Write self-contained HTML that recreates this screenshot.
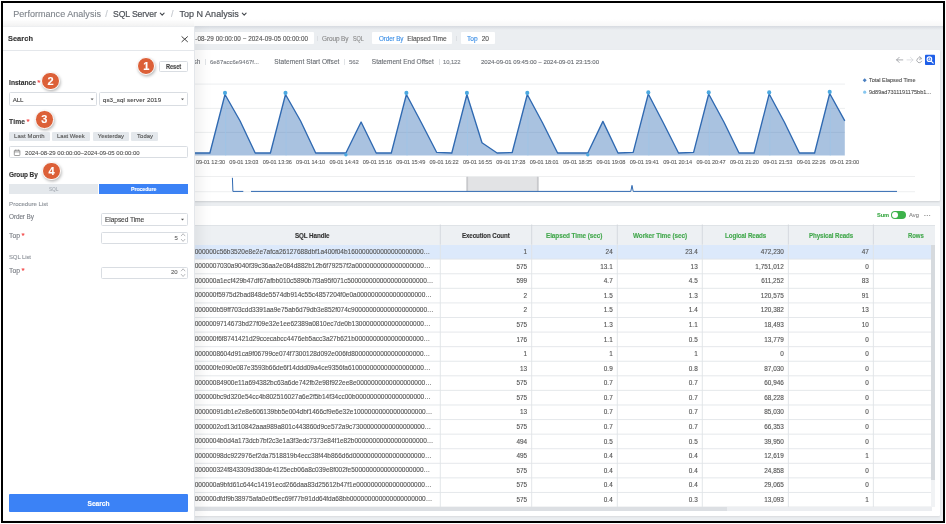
<!DOCTYPE html>
<html lang="en"><head><meta charset="utf-8"><title>Top N Analysis</title>
<style>
html,body{margin:0;padding:0;background:#fff;}
body{width:946px;height:524px;overflow:hidden;position:relative;font-family:"Liberation Sans",sans-serif;}
#frame{position:absolute;left:1px;top:1px;width:940px;height:517.6px;border:2px solid #000;overflow:hidden;}
#c{position:absolute;left:-3px;top:-3px;width:946px;height:524px;will-change:transform;}
.r{position:absolute;}
.t{position:absolute;white-space:pre;line-height:1;transform-origin:0 50%;-webkit-text-stroke:0.12px currentColor;}
.ell{overflow:hidden;text-overflow:ellipsis;}
.badge{border-radius:50%;background:#dc6038;border:1px solid #fff;box-sizing:border-box;box-shadow:0.8px 1.5px 3px rgba(0,0,0,.28);}
</style></head>
<body><div id="frame"><div id="c">
<div class="r" style="left:3.00px;top:26.00px;width:940.00px;height:494.50px;background:#ebeef1;"></div>
<div class="r" style="left:3.00px;top:26.00px;width:940.00px;height:4.00px;background:linear-gradient(#d6dae0,#ebeef1);"></div>
<div class="r" style="left:3.00px;top:3.00px;width:940.00px;height:23.00px;background:#fff;"></div>
<div class="r" style="left:3.00px;top:19.00px;width:940.00px;height:7.00px;background:linear-gradient(rgba(0,0,0,0),rgba(0,0,0,.03));"></div>
<div class="r" style="left:3.00px;top:19.00px;width:191.30px;height:7.00px;background:linear-gradient(rgba(0,0,0,0),rgba(0,0,0,.02));"></div>
<span class="t" style="left:13.30px;top:9.80px;font-size:9px;color:#7f848b;letter-spacing:0.033px;">Performance Analysis</span>
<span class="t" style="left:105.30px;top:9.80px;font-size:9px;color:#c3c7cd;">/</span>
<span class="t" style="left:112.80px;top:9.80px;font-size:9px;color:#4d5157;letter-spacing:-0.100px;transform:scaleX(0.9576);-webkit-text-stroke:0.2px #4d5157;">SQL Server</span>
<span class="t" style="left:170.90px;top:9.80px;font-size:9px;color:#c3c7cd;">/</span>
<span class="t" style="left:179.40px;top:9.80px;font-size:9px;color:#4d5157;letter-spacing:0.027px;-webkit-text-stroke:0.2px #4d5157;">Top N Analysis</span>
<div class="r" style="left:150.00px;top:32.30px;width:164.00px;height:11.70px;background:#fff;border-radius:1px;"></div>
<div class="r" style="left:372.40px;top:32.30px;width:79.90px;height:11.70px;background:#fff;border-radius:1px;"></div>
<div class="r" style="left:460.50px;top:32.30px;width:34.50px;height:11.70px;background:#fff;border-radius:1px;"></div>
<div class="r" style="left:317.00px;top:35.70px;width:0.80px;height:5.50px;background:#dcdfe3;"></div>
<div class="r" style="left:456.00px;top:35.70px;width:0.80px;height:5.50px;background:#dcdfe3;"></div>
<span class="t" style="left:181.28px;top:35.70px;font-size:6.3px;color:#555;">2024</span>
<span class="t" style="left:195.30px;top:35.70px;font-size:6.3px;color:#555;letter-spacing:0.071px;">-08-29 00:00:00 ~ 2024-09-05 00:00:00</span>
<span class="t" style="left:321.80px;top:35.70px;font-size:6.6px;color:#888;letter-spacing:-0.100px;transform:scaleX(0.9775);">Group By</span>
<span class="t" style="left:352.70px;top:35.70px;font-size:6.6px;color:#888;letter-spacing:-0.100px;transform:scaleX(0.8338);">SQL</span>
<span class="t" style="left:378.50px;top:35.70px;font-size:6.6px;color:#3a8ee6;letter-spacing:-0.100px;transform:scaleX(0.9477);">Order By</span>
<span class="t" style="left:407.20px;top:35.70px;font-size:6.6px;color:#555;letter-spacing:-0.048px;">Elapsed Time</span>
<span class="t" style="left:467.00px;top:35.70px;font-size:6.6px;color:#3a8ee6;letter-spacing:-0.016px;">Top</span>
<span class="t" style="left:481.80px;top:35.70px;font-size:6.6px;color:#555;letter-spacing:-0.096px;">20</span>
<div class="r" style="left:150.00px;top:50.00px;width:790.00px;height:150.80px;background:#fff;box-shadow:0 1px 2px rgba(0,0,0,.12);border-radius:1px;"></div>
<span class="t" style="left:170.00px;top:59.00px;font-size:6.5px;color:#6a6e74;letter-spacing:0.100px;">SQL Hash</span>
<div class="r" style="left:205.30px;top:59.20px;width:0.70px;height:5.70px;background:#e1e4e7;"></div>
<span class="t" style="left:210.00px;top:60.00px;font-size:5.9px;color:#7a7e84;letter-spacing:0.025px;">6e87acc6e9467f...</span>
<span class="t" style="left:274.30px;top:59.00px;font-size:6.5px;color:#6a6e74;letter-spacing:0.042px;">Statement Start Offset</span>
<div class="r" style="left:344.20px;top:59.20px;width:0.70px;height:5.70px;background:#e1e4e7;"></div>
<span class="t" style="left:348.90px;top:59.00px;font-size:6.1px;color:#7a7e84;letter-spacing:-0.100px;transform:scaleX(0.9978);">562</span>
<span class="t" style="left:371.80px;top:59.00px;font-size:6.5px;color:#6a6e74;letter-spacing:-0.002px;">Statement End Offset</span>
<div class="r" style="left:438.70px;top:59.20px;width:0.70px;height:5.70px;background:#e1e4e7;"></div>
<span class="t" style="left:443.30px;top:59.00px;font-size:6.1px;color:#7a7e84;letter-spacing:-0.100px;transform:scaleX(0.9674);">10,122</span>
<span class="t" style="left:481.00px;top:59.00px;font-size:6.1px;color:#6a6e74;letter-spacing:-0.052px;">2024-09-01 09:45:00 ~ 2024-09-01 23:15:00</span>
<span class="t" style="left:868.90px;top:78.00px;font-size:5.5px;color:#555;letter-spacing:0.008px;">Total Elapsed Time</span>
<span class="t" style="left:868.90px;top:90.00px;font-size:5.5px;color:#555;letter-spacing:0.029px;">9d89ad7311191175bb1...</span>
<span class="t" style="left:196.00px;top:160.45px;font-size:5.6px;color:#666;letter-spacing:-0.082px;">09-01 12:30</span>
<span class="t" style="left:229.37px;top:160.45px;font-size:5.6px;color:#666;letter-spacing:-0.082px;">09-01 13:03</span>
<span class="t" style="left:262.74px;top:160.45px;font-size:5.6px;color:#666;letter-spacing:-0.082px;">09-01 13:36</span>
<span class="t" style="left:296.11px;top:160.45px;font-size:5.6px;color:#666;letter-spacing:-0.082px;">09-01 14:10</span>
<span class="t" style="left:329.48px;top:160.45px;font-size:5.6px;color:#666;letter-spacing:-0.082px;">09-01 14:43</span>
<span class="t" style="left:362.85px;top:160.45px;font-size:5.6px;color:#666;letter-spacing:-0.082px;">09-01 15:16</span>
<span class="t" style="left:396.22px;top:160.45px;font-size:5.6px;color:#666;letter-spacing:-0.082px;">09-01 15:49</span>
<span class="t" style="left:429.59px;top:160.45px;font-size:5.6px;color:#666;letter-spacing:-0.082px;">09-01 16:22</span>
<span class="t" style="left:462.96px;top:160.45px;font-size:5.6px;color:#666;letter-spacing:-0.082px;">09-01 16:55</span>
<span class="t" style="left:496.33px;top:160.45px;font-size:5.6px;color:#666;letter-spacing:-0.082px;">09-01 17:28</span>
<span class="t" style="left:529.70px;top:160.45px;font-size:5.6px;color:#666;letter-spacing:-0.082px;">09-01 18:01</span>
<span class="t" style="left:563.07px;top:160.45px;font-size:5.6px;color:#666;letter-spacing:-0.082px;">09-01 18:35</span>
<span class="t" style="left:596.44px;top:160.45px;font-size:5.6px;color:#666;letter-spacing:-0.082px;">09-01 19:08</span>
<span class="t" style="left:629.81px;top:160.45px;font-size:5.6px;color:#666;letter-spacing:-0.082px;">09-01 19:41</span>
<span class="t" style="left:663.18px;top:160.45px;font-size:5.6px;color:#666;letter-spacing:-0.082px;">09-01 20:14</span>
<span class="t" style="left:696.55px;top:160.45px;font-size:5.6px;color:#666;letter-spacing:-0.082px;">09-01 20:47</span>
<span class="t" style="left:729.92px;top:160.45px;font-size:5.6px;color:#666;letter-spacing:-0.082px;">09-01 21:20</span>
<span class="t" style="left:763.29px;top:160.45px;font-size:5.6px;color:#666;letter-spacing:-0.082px;">09-01 21:53</span>
<span class="t" style="left:796.66px;top:160.45px;font-size:5.6px;color:#666;letter-spacing:-0.082px;">09-01 22:26</span>
<span class="t" style="left:830.03px;top:160.45px;font-size:5.6px;color:#666;letter-spacing:-0.082px;">09-01 23:00</span>
<svg class="r" style="left:0;top:0" width="946" height="524" viewBox="0 0 946 524">
<line x1="150" x2="845" y1="84.1" y2="84.1" stroke="#e4e6e9" stroke-width="0.7"/>
<line x1="150" x2="845" y1="108.4" y2="108.4" stroke="#e4e6e9" stroke-width="0.7"/>
<line x1="150" x2="845" y1="132.4" y2="132.4" stroke="#e4e6e9" stroke-width="0.7"/>
<polygon points="179.6,155.5 179.6,153.0 194.8,153.0 209.9,153.0 225.0,94.5 240.1,121.0 255.2,153.0 270.4,153.0 285.5,94.5 300.6,121.0 315.7,153.0 330.8,153.0 345.9,153.0 361.1,122.0 376.2,153.0 391.3,153.0 406.4,94.5 421.5,123.0 436.6,152.3 451.8,153.0 466.9,94.5 482.0,142.8 497.1,153.0 512.2,152.5 527.3,94.5 542.5,122.8 557.6,153.0 572.7,153.0 587.8,153.0 602.9,121.4 618.0,153.0 633.2,152.3 648.3,94.0 663.4,123.0 678.5,153.0 693.6,152.3 708.7,94.0 723.9,122.0 739.0,153.0 754.1,153.0 769.2,94.0 784.3,122.0 799.4,153.0 814.6,153.0 829.7,93.5 844.8,120.8 844.8,155.5" fill="#2a68b3" fill-opacity="0.405"/>
<line x1="225.6" x2="225.6" y1="95.5" y2="155.5" stroke="#9cc4e8" stroke-width="0.7"/>
<line x1="286.1" x2="286.1" y1="95.5" y2="155.5" stroke="#9cc4e8" stroke-width="0.7"/>
<line x1="407.0" x2="407.0" y1="95.5" y2="155.5" stroke="#9cc4e8" stroke-width="0.7"/>
<line x1="467.5" x2="467.5" y1="95.5" y2="155.5" stroke="#9cc4e8" stroke-width="0.7"/>
<line x1="527.9" x2="527.9" y1="95.5" y2="155.5" stroke="#9cc4e8" stroke-width="0.7"/>
<line x1="648.9" x2="648.9" y1="95" y2="155.5" stroke="#9cc4e8" stroke-width="0.7"/>
<line x1="709.3" x2="709.3" y1="95" y2="155.5" stroke="#9cc4e8" stroke-width="0.7"/>
<line x1="769.8" x2="769.8" y1="95" y2="155.5" stroke="#9cc4e8" stroke-width="0.7"/>
<line x1="830.3" x2="830.3" y1="94.5" y2="155.5" stroke="#9cc4e8" stroke-width="0.7"/>
<polyline points="179.6,153.0 194.8,153.0 209.9,153.0 225.0,94.5 240.1,121.0 255.2,153.0 270.4,153.0 285.5,94.5 300.6,121.0 315.7,153.0 330.8,153.0 345.9,153.0 361.1,122.0 376.2,153.0 391.3,153.0 406.4,94.5 421.5,123.0 436.6,152.3 451.8,153.0 466.9,94.5 482.0,142.8 497.1,153.0 512.2,152.5 527.3,94.5 542.5,122.8 557.6,153.0 572.7,153.0 587.8,153.0 602.9,121.4 618.0,153.0 633.2,152.3 648.3,94.0 663.4,123.0 678.5,153.0 693.6,152.3 708.7,94.0 723.9,122.0 739.0,153.0 754.1,153.0 769.2,94.0 784.3,122.0 799.4,153.0 814.6,153.0 829.7,93.5 844.8,120.8" fill="none" stroke="#2f69b1" stroke-width="1.35" stroke-linejoin="round"/>
<circle cx="225.0" cy="92.9" r="2.05" fill="#4aa8e0"/>
<circle cx="285.5" cy="92.9" r="2.05" fill="#4aa8e0"/>
<circle cx="406.4" cy="92.9" r="2.05" fill="#4aa8e0"/>
<circle cx="466.9" cy="92.9" r="2.05" fill="#4aa8e0"/>
<circle cx="527.3" cy="92.9" r="2.05" fill="#4aa8e0"/>
<circle cx="648.3" cy="92.4" r="2.05" fill="#4aa8e0"/>
<circle cx="708.7" cy="92.4" r="2.05" fill="#4aa8e0"/>
<circle cx="769.2" cy="92.4" r="2.05" fill="#4aa8e0"/>
<circle cx="829.7" cy="91.9" r="2.05" fill="#4aa8e0"/>
<circle cx="345.9" cy="154.8" r="1.7" fill="#4aa8e0"/>
<circle cx="587.8" cy="154.8" r="1.7" fill="#4aa8e0"/>
<path d="M864.7 78.2 L866.7 80.2 L864.7 82.2 L862.7 80.2Z" fill="#4a7fc0"/>
<circle cx="864.7" cy="92.2" r="1.6" fill="#87c7f0"/>
<line x1="150" x2="915" y1="176.5" y2="176.5" stroke="#e6e8ea" stroke-width="0.7"/>
<line x1="150" x2="915" y1="191.7" y2="191.7" stroke="#e6e8ea" stroke-width="0.7"/>
<rect x="467" y="176.8" width="71" height="14.4" fill="#e2e3e5"/>
<rect x="466.3" y="176.8" width="1.8" height="14.4" fill="#c8c9cc"/>
<rect x="536.9" y="176.8" width="1.8" height="14.4" fill="#c8c9cc"/>
<polyline points="232.4,177.8 232.9,191.4 243.3,191.4" fill="none" stroke="#2f69b1" stroke-width="1"/>
<polyline points="251,191.4 630.8,191.4 632,185.4 633.2,191.4 897,191.4" fill="none" stroke="#2f69b1" stroke-width="1"/>
<g fill="none" stroke="#8a8d92" stroke-width="0.7" stroke-linecap="round" stroke-linejoin="round"><path d="M902.8 59.9H896.6M899.2 57.3L896.6 59.9L899.2 62.5"/></g>
<g fill="none" stroke="#d0d3d7" stroke-width="0.7" stroke-linecap="round" stroke-linejoin="round"><path d="M907 59.9H913M910.4 57.3L913 59.9L910.4 62.5"/></g>
<g fill="none" stroke="#8a8d92" stroke-width="0.7" stroke-linecap="round" stroke-linejoin="round"><path d="M921.3 58.6A2.5 2.5 0 1 0 921.7 61.2"/><path d="M919.6 56.6L921.6 58.3L919.6 59.6" /></g>
<rect x="925" y="54.8" width="10" height="10.2" rx="0.8" fill="#1f5fe8"/>
<g fill="none" stroke="#fff" stroke-width="1.1" stroke-linecap="round"><circle cx="929.4" cy="59.2" r="2.3"/><path d="M931.2 61.1L933.2 63.2"/><path d="M928.4 59.2H930.4M929.4 58.2V60.2" stroke-width="0.7"/></g>
<g fill="none" stroke="#43474d" stroke-width="1.1" stroke-linecap="round" stroke-linejoin="round"><path d="M160.3 13.2L162.2 15.1L164.1 13.2"/><path d="M242.3 13.2L244.2 15.1L246.1 13.2"/></g>
</svg>
<div class="r" style="left:150.00px;top:206.10px;width:790.00px;height:309.90px;background:#fff;box-shadow:0 1px 2px rgba(0,0,0,.08);border-radius:1px;"></div>
<span class="t" style="left:877.00px;top:213.30px;font-size:5.8px;color:#3aa845;font-weight:700;letter-spacing:-0.100px;transform:scaleX(0.9746);">Sum</span>
<div class="r" style="left:891.00px;top:211.30px;width:15.30px;height:8.10px;background:#3cb24a;border-radius:4.1px;"><div class="r" style="left:1px;top:1px;width:6.1px;height:6.1px;border-radius:50%;background:#fff"></div></div>
<span class="t" style="left:909.00px;top:213.30px;font-size:5.8px;color:#888;letter-spacing:0.044px;">Avg</span>
<span class="t" style="left:924.00px;top:212.00px;font-size:6px;color:#999;font-weight:700;letter-spacing:0.300px;transform:scaleX(1.0370);">···</span>
<div class="r" style="left:150.00px;top:224.50px;width:784.60px;height:20.10px;background:#edf0f3;border-top:0.6px solid #dfe3e7;"></div>
<span class="t" style="left:294.55px;top:232.50px;font-size:6.5px;color:#333;font-weight:700;letter-spacing:-0.100px;transform:scaleX(0.9641);">SQL Handle</span>
<span class="t" style="left:461.85px;top:232.50px;font-size:6.5px;color:#333;font-weight:700;letter-spacing:-0.100px;transform:scaleX(0.9504);">Execution Count</span>
<span class="t" style="left:546.45px;top:232.50px;font-size:6.5px;color:#43a84d;font-weight:700;letter-spacing:-0.100px;transform:scaleX(0.9872);">Elapsed Time (sec)</span>
<span class="t" style="left:633.00px;top:232.50px;font-size:6.5px;color:#43a84d;font-weight:700;letter-spacing:-0.100px;transform:scaleX(0.9913);">Worker Time (sec)</span>
<span class="t" style="left:724.85px;top:232.50px;font-size:6.5px;color:#43a84d;font-weight:700;letter-spacing:-0.100px;transform:scaleX(0.9643);">Logical Reads</span>
<span class="t" style="left:808.80px;top:232.50px;font-size:6.5px;color:#43a84d;font-weight:700;letter-spacing:-0.100px;transform:scaleX(0.9535);">Physical Reads</span>
<span class="t" style="left:908.40px;top:232.50px;font-size:6.5px;color:#43a84d;font-weight:700;letter-spacing:-0.100px;transform:scaleX(0.9298);">Rows</span>
<div class="r" style="left:150.00px;top:244.60px;width:782.00px;height:14.58px;background:#dce9fb;"></div>
<div class="t ell" style="left:180.6px;top:248.55px;width:253px;font-size:6.5px;color:#555">0x02000000c56b3520e8e2e7afca26127688dbf1a400f04b1600000000000000000000000000000000000000</div>
<span class="t" style="left:523.54px;top:249.05px;font-size:6.4px;color:#555;">1</span>
<span class="t" style="left:605.59px;top:249.05px;font-size:6.4px;color:#555;">24</span>
<span class="t" style="left:685.25px;top:249.05px;font-size:6.4px;color:#555;">23.4</span>
<span class="t" style="left:760.69px;top:249.05px;font-size:6.4px;color:#555;">472,230</span>
<span class="t" style="left:861.69px;top:249.05px;font-size:6.4px;color:#555;">47</span>
<div class="t ell" style="left:180.6px;top:263.13px;width:253px;font-size:6.5px;color:#555">0x020000007030a9040f39c36aa2e084d882b12b6f79257f2a00000000000000000000000000000000000000</div>
<span class="t" style="left:516.43px;top:263.63px;font-size:6.4px;color:#555;">575</span>
<span class="t" style="left:600.25px;top:263.63px;font-size:6.4px;color:#555;">13.1</span>
<span class="t" style="left:690.59px;top:263.63px;font-size:6.4px;color:#555;">13</span>
<span class="t" style="left:755.36px;top:263.63px;font-size:6.4px;color:#555;">1,751,012</span>
<span class="t" style="left:865.24px;top:263.63px;font-size:6.4px;color:#555;">0</span>
<div class="t ell" style="left:180.6px;top:277.71px;width:253px;font-size:6.5px;color:#555">0x02000000a1ecf429b47df67afbb010c5890b7f3a95f071c500000000000000000000000000000000000000</div>
<span class="t" style="left:516.43px;top:278.21px;font-size:6.4px;color:#555;">599</span>
<span class="t" style="left:603.81px;top:278.21px;font-size:6.4px;color:#555;">4.7</span>
<span class="t" style="left:688.81px;top:278.21px;font-size:6.4px;color:#555;">4.5</span>
<span class="t" style="left:761.16px;top:278.21px;font-size:6.4px;color:#555;">611,252</span>
<span class="t" style="left:861.69px;top:278.21px;font-size:6.4px;color:#555;">83</span>
<div class="t ell" style="left:180.6px;top:292.29px;width:253px;font-size:6.5px;color:#555">0x02000000f5975d2bad848de5574db914c55c4857204f0e0a00000000000000000000000000000000000000</div>
<span class="t" style="left:523.54px;top:292.79px;font-size:6.4px;color:#555;">2</span>
<span class="t" style="left:603.81px;top:292.79px;font-size:6.4px;color:#555;">1.5</span>
<span class="t" style="left:688.81px;top:292.79px;font-size:6.4px;color:#555;">1.3</span>
<span class="t" style="left:760.69px;top:292.79px;font-size:6.4px;color:#555;">120,575</span>
<span class="t" style="left:861.69px;top:292.79px;font-size:6.4px;color:#555;">91</span>
<div class="t ell" style="left:180.6px;top:306.87px;width:253px;font-size:6.5px;color:#555">0x02000000b59ff703cdd3391aa9e75ab6d79db3e852f074c900000000000000000000000000000000000000</div>
<span class="t" style="left:523.54px;top:307.37px;font-size:6.4px;color:#555;">2</span>
<span class="t" style="left:603.81px;top:307.37px;font-size:6.4px;color:#555;">1.5</span>
<span class="t" style="left:688.81px;top:307.37px;font-size:6.4px;color:#555;">1.4</span>
<span class="t" style="left:760.69px;top:307.37px;font-size:6.4px;color:#555;">120,382</span>
<span class="t" style="left:861.69px;top:307.37px;font-size:6.4px;color:#555;">13</span>
<div class="t ell" style="left:180.6px;top:321.45px;width:253px;font-size:6.5px;color:#555">0x020000009714673bd27f09e32e1ee62389a0810ec7de0b1300000000000000000000000000000000000000</div>
<span class="t" style="left:516.43px;top:321.95px;font-size:6.4px;color:#555;">575</span>
<span class="t" style="left:603.81px;top:321.95px;font-size:6.4px;color:#555;">1.3</span>
<span class="t" style="left:688.81px;top:321.95px;font-size:6.4px;color:#555;">1.1</span>
<span class="t" style="left:764.25px;top:321.95px;font-size:6.4px;color:#555;">18,493</span>
<span class="t" style="left:861.69px;top:321.95px;font-size:6.4px;color:#555;">10</span>
<div class="t ell" style="left:180.6px;top:336.03px;width:253px;font-size:6.5px;color:#555">0x02000000f6f8741421d29ccecabcc4476eb5acc3a27b621b00000000000000000000000000000000000000</div>
<span class="t" style="left:516.43px;top:336.53px;font-size:6.4px;color:#555;">176</span>
<span class="t" style="left:603.81px;top:336.53px;font-size:6.4px;color:#555;">1.1</span>
<span class="t" style="left:688.81px;top:336.53px;font-size:6.4px;color:#555;">0.5</span>
<span class="t" style="left:764.25px;top:336.53px;font-size:6.4px;color:#555;">13,779</span>
<span class="t" style="left:865.24px;top:336.53px;font-size:6.4px;color:#555;">0</span>
<div class="t ell" style="left:180.6px;top:350.61px;width:253px;font-size:6.5px;color:#555">0x020000008604d91ca9f06799ce074f7300128d092e006fd800000000000000000000000000000000000000</div>
<span class="t" style="left:523.54px;top:351.11px;font-size:6.4px;color:#555;">1</span>
<span class="t" style="left:609.14px;top:351.11px;font-size:6.4px;color:#555;">1</span>
<span class="t" style="left:694.14px;top:351.11px;font-size:6.4px;color:#555;">1</span>
<span class="t" style="left:780.24px;top:351.11px;font-size:6.4px;color:#555;">0</span>
<span class="t" style="left:865.24px;top:351.11px;font-size:6.4px;color:#555;">0</span>
<div class="t ell" style="left:180.6px;top:365.19px;width:253px;font-size:6.5px;color:#555">0x02000000fe090e087e3593b66de6f14ddd09a4ce9356fa6100000000000000000000000000000000000000</div>
<span class="t" style="left:519.99px;top:365.69px;font-size:6.4px;color:#555;">13</span>
<span class="t" style="left:603.81px;top:365.69px;font-size:6.4px;color:#555;">0.9</span>
<span class="t" style="left:688.81px;top:365.69px;font-size:6.4px;color:#555;">0.8</span>
<span class="t" style="left:764.25px;top:365.69px;font-size:6.4px;color:#555;">87,030</span>
<span class="t" style="left:865.24px;top:365.69px;font-size:6.4px;color:#555;">0</span>
<div class="t ell" style="left:180.6px;top:379.77px;width:253px;font-size:6.5px;color:#555">0x0200000084900e11a694382bc63a6de742fb2e98f922ee8e00000000000000000000000000000000000000</div>
<span class="t" style="left:516.43px;top:380.27px;font-size:6.4px;color:#555;">575</span>
<span class="t" style="left:603.81px;top:380.27px;font-size:6.4px;color:#555;">0.7</span>
<span class="t" style="left:688.81px;top:380.27px;font-size:6.4px;color:#555;">0.7</span>
<span class="t" style="left:764.25px;top:380.27px;font-size:6.4px;color:#555;">60,946</span>
<span class="t" style="left:865.24px;top:380.27px;font-size:6.4px;color:#555;">0</span>
<div class="t ell" style="left:180.6px;top:394.35px;width:253px;font-size:6.5px;color:#555">0x02000000bc9d320e54cc4b802516027a6e2f5b14f34cc00b00000000000000000000000000000000000000</div>
<span class="t" style="left:516.43px;top:394.85px;font-size:6.4px;color:#555;">575</span>
<span class="t" style="left:603.81px;top:394.85px;font-size:6.4px;color:#555;">0.7</span>
<span class="t" style="left:688.81px;top:394.85px;font-size:6.4px;color:#555;">0.7</span>
<span class="t" style="left:764.25px;top:394.85px;font-size:6.4px;color:#555;">68,228</span>
<span class="t" style="left:865.24px;top:394.85px;font-size:6.4px;color:#555;">0</span>
<div class="t ell" style="left:180.6px;top:408.93px;width:253px;font-size:6.5px;color:#555">0x0200000091db1e2e8e606139bb5e004dbf1466cf9e6e32e100000000000000000000000000000000000000</div>
<span class="t" style="left:519.99px;top:409.43px;font-size:6.4px;color:#555;">13</span>
<span class="t" style="left:603.81px;top:409.43px;font-size:6.4px;color:#555;">0.7</span>
<span class="t" style="left:688.81px;top:409.43px;font-size:6.4px;color:#555;">0.7</span>
<span class="t" style="left:764.25px;top:409.43px;font-size:6.4px;color:#555;">85,030</span>
<span class="t" style="left:865.24px;top:409.43px;font-size:6.4px;color:#555;">0</span>
<div class="t ell" style="left:180.6px;top:423.51px;width:253px;font-size:6.5px;color:#555">0x020000002cd13d10842aaa989a801c443860d9ce572a9c7300000000000000000000000000000000000000</div>
<span class="t" style="left:516.43px;top:424.01px;font-size:6.4px;color:#555;">575</span>
<span class="t" style="left:603.81px;top:424.01px;font-size:6.4px;color:#555;">0.7</span>
<span class="t" style="left:688.81px;top:424.01px;font-size:6.4px;color:#555;">0.7</span>
<span class="t" style="left:764.25px;top:424.01px;font-size:6.4px;color:#555;">66,353</span>
<span class="t" style="left:865.24px;top:424.01px;font-size:6.4px;color:#555;">0</span>
<div class="t ell" style="left:180.6px;top:438.09px;width:253px;font-size:6.5px;color:#555">0x020000004b0d4a173dcb7bf2c3e1a3f3edc7373e84f1e82b00000000000000000000000000000000000000</div>
<span class="t" style="left:516.43px;top:438.59px;font-size:6.4px;color:#555;">494</span>
<span class="t" style="left:603.81px;top:438.59px;font-size:6.4px;color:#555;">0.5</span>
<span class="t" style="left:688.81px;top:438.59px;font-size:6.4px;color:#555;">0.5</span>
<span class="t" style="left:764.25px;top:438.59px;font-size:6.4px;color:#555;">39,950</span>
<span class="t" style="left:865.24px;top:438.59px;font-size:6.4px;color:#555;">0</span>
<div class="t ell" style="left:180.6px;top:452.67px;width:253px;font-size:6.5px;color:#555">0x0200000098dc922976ef2da7518819b4ecc38f44b866d6d000000000000000000000000000000000000000</div>
<span class="t" style="left:516.43px;top:453.17px;font-size:6.4px;color:#555;">495</span>
<span class="t" style="left:603.81px;top:453.17px;font-size:6.4px;color:#555;">0.4</span>
<span class="t" style="left:688.81px;top:453.17px;font-size:6.4px;color:#555;">0.4</span>
<span class="t" style="left:764.25px;top:453.17px;font-size:6.4px;color:#555;">12,619</span>
<span class="t" style="left:865.24px;top:453.17px;font-size:6.4px;color:#555;">1</span>
<div class="t ell" style="left:180.6px;top:467.25px;width:253px;font-size:6.5px;color:#555">0x02000000324f843309d380de4125ecb06a8c039e8f002fe500000000000000000000000000000000000000</div>
<span class="t" style="left:516.43px;top:467.75px;font-size:6.4px;color:#555;">575</span>
<span class="t" style="left:603.81px;top:467.75px;font-size:6.4px;color:#555;">0.4</span>
<span class="t" style="left:688.81px;top:467.75px;font-size:6.4px;color:#555;">0.4</span>
<span class="t" style="left:764.25px;top:467.75px;font-size:6.4px;color:#555;">24,858</span>
<span class="t" style="left:865.24px;top:467.75px;font-size:6.4px;color:#555;">0</span>
<div class="t ell" style="left:180.6px;top:481.83px;width:253px;font-size:6.5px;color:#555">0x02000000a9bfd61c644c14191ecd266daa83d25612b47f1e00000000000000000000000000000000000000</div>
<span class="t" style="left:516.43px;top:482.33px;font-size:6.4px;color:#555;">575</span>
<span class="t" style="left:603.81px;top:482.33px;font-size:6.4px;color:#555;">0.4</span>
<span class="t" style="left:688.81px;top:482.33px;font-size:6.4px;color:#555;">0.4</span>
<span class="t" style="left:764.25px;top:482.33px;font-size:6.4px;color:#555;">29,065</span>
<span class="t" style="left:865.24px;top:482.33px;font-size:6.4px;color:#555;">0</span>
<div class="t ell" style="left:180.6px;top:496.41px;width:253px;font-size:6.5px;color:#555">0x02000000dfdf9b38975afa0e0f5ec69f77b91dd64fda68bb00000000000000000000000000000000000000</div>
<span class="t" style="left:516.43px;top:496.91px;font-size:6.4px;color:#555;">575</span>
<span class="t" style="left:603.81px;top:496.91px;font-size:6.4px;color:#555;">0.4</span>
<span class="t" style="left:688.81px;top:496.91px;font-size:6.4px;color:#555;">0.3</span>
<span class="t" style="left:764.25px;top:496.91px;font-size:6.4px;color:#555;">13,093</span>
<span class="t" style="left:865.24px;top:496.91px;font-size:6.4px;color:#555;">1</span>
<svg class="r" style="left:0;top:0" width="946" height="524" viewBox="0 0 946 524"><line x1="150" x2="932" y1="259.18" y2="259.18" stroke="#e2e5e9" stroke-width="0.9"/><line x1="150" x2="932" y1="273.76" y2="273.76" stroke="#e2e5e9" stroke-width="0.9"/><line x1="150" x2="932" y1="288.34" y2="288.34" stroke="#e2e5e9" stroke-width="0.9"/><line x1="150" x2="932" y1="302.92" y2="302.92" stroke="#e2e5e9" stroke-width="0.9"/><line x1="150" x2="932" y1="317.50" y2="317.50" stroke="#e2e5e9" stroke-width="0.9"/><line x1="150" x2="932" y1="332.08" y2="332.08" stroke="#e2e5e9" stroke-width="0.9"/><line x1="150" x2="932" y1="346.66" y2="346.66" stroke="#e2e5e9" stroke-width="0.9"/><line x1="150" x2="932" y1="361.24" y2="361.24" stroke="#e2e5e9" stroke-width="0.9"/><line x1="150" x2="932" y1="375.82" y2="375.82" stroke="#e2e5e9" stroke-width="0.9"/><line x1="150" x2="932" y1="390.40" y2="390.40" stroke="#e2e5e9" stroke-width="0.9"/><line x1="150" x2="932" y1="404.98" y2="404.98" stroke="#e2e5e9" stroke-width="0.9"/><line x1="150" x2="932" y1="419.56" y2="419.56" stroke="#e2e5e9" stroke-width="0.9"/><line x1="150" x2="932" y1="434.14" y2="434.14" stroke="#e2e5e9" stroke-width="0.9"/><line x1="150" x2="932" y1="448.72" y2="448.72" stroke="#e2e5e9" stroke-width="0.9"/><line x1="150" x2="932" y1="463.30" y2="463.30" stroke="#e2e5e9" stroke-width="0.9"/><line x1="150" x2="932" y1="477.88" y2="477.88" stroke="#e2e5e9" stroke-width="0.9"/><line x1="150" x2="932" y1="492.46" y2="492.46" stroke="#e2e5e9" stroke-width="0.9"/><line x1="150" x2="932" y1="507.04" y2="507.04" stroke="#e2e5e9" stroke-width="0.9"/><line x1="440.3" x2="440.3" y1="224.5" y2="244.6" stroke="#d3d7dc" stroke-width="0.9"/><line x1="440.3" x2="440.3" y1="244.6" y2="507.04" stroke="#e0e3e7" stroke-width="0.9"/><line x1="531.7" x2="531.7" y1="224.5" y2="244.6" stroke="#d3d7dc" stroke-width="0.9"/><line x1="531.7" x2="531.7" y1="244.6" y2="507.04" stroke="#e0e3e7" stroke-width="0.9"/><line x1="617.3" x2="617.3" y1="224.5" y2="244.6" stroke="#d3d7dc" stroke-width="0.9"/><line x1="617.3" x2="617.3" y1="244.6" y2="507.04" stroke="#e0e3e7" stroke-width="0.9"/><line x1="702.3" x2="702.3" y1="224.5" y2="244.6" stroke="#d3d7dc" stroke-width="0.9"/><line x1="702.3" x2="702.3" y1="244.6" y2="507.04" stroke="#e0e3e7" stroke-width="0.9"/><line x1="788.4" x2="788.4" y1="224.5" y2="244.6" stroke="#d3d7dc" stroke-width="0.9"/><line x1="788.4" x2="788.4" y1="244.6" y2="507.04" stroke="#e0e3e7" stroke-width="0.9"/><line x1="873.4" x2="873.4" y1="224.5" y2="244.6" stroke="#d3d7dc" stroke-width="0.9"/><line x1="873.4" x2="873.4" y1="244.6" y2="507.04" stroke="#e0e3e7" stroke-width="0.9"/></svg>
<div class="r" style="left:931.40px;top:244.60px;width:3.40px;height:262.40px;background:#f1f3f5;"></div>
<div class="r" style="left:931.40px;top:244.60px;width:3.40px;height:235.40px;background:#d6dade;"></div>
<div class="r" style="left:150.00px;top:507.00px;width:782.00px;height:4.00px;background:#eceef1;"></div>
<div class="r" style="left:150.00px;top:507.00px;width:576.50px;height:4.00px;background:#dcdfe3;"></div>
<div class="r" style="left:3.00px;top:26.00px;width:191.00px;height:494.50px;background:#fff;box-shadow:5px 0 14px rgba(0,0,0,.075);clip-path:inset(0 -40px 0 0);"></div>
<div class="r" style="left:194.00px;top:26.00px;width:1.00px;height:494.50px;background:#e3e6ea;"></div>
<div class="r" style="left:3.00px;top:25.60px;width:191.30px;height:1.00px;background:linear-gradient(#f4f5f6,#e6e8eb);"></div>
<div class="r" style="left:3.00px;top:50.00px;width:191.30px;height:0.70px;background:#e4e7eb;"></div>
<span class="t" style="left:7.90px;top:35.10px;font-size:7.4px;color:#333;font-weight:700;letter-spacing:0.081px;">Search</span>
<div class="r badge" style="left:137.10px;top:57.10px;width:18.4px;height:18.4px;"></div>
<span class="t" style="left:143.24px;top:61.30px;font-size:11px;color:#fff;font-weight:700;">1</span>
<div class="r badge" style="left:41.30px;top:72.10px;width:18.4px;height:18.4px;"></div>
<span class="t" style="left:47.44px;top:76.30px;font-size:11px;color:#fff;font-weight:700;">2</span>
<div class="r badge" style="left:35.20px;top:110.20px;width:18.4px;height:18.4px;"></div>
<span class="t" style="left:41.34px;top:114.40px;font-size:11px;color:#fff;font-weight:700;">3</span>
<div class="r badge" style="left:42.40px;top:162.10px;width:18.4px;height:18.4px;"></div>
<span class="t" style="left:48.54px;top:166.30px;font-size:11px;color:#fff;font-weight:700;">4</span>
<div class="r" style="left:159.20px;top:61.10px;width:28.80px;height:11.20px;background:#fff;border:0.7px solid #d9dde2;box-sizing:border-box;border-radius:1.5px;"></div>
<span class="t" style="left:166.30px;top:63.90px;font-size:6.3px;color:#444;font-weight:700;letter-spacing:-0.100px;transform:scaleX(0.9039);">Reset</span>
<span class="t" style="left:9.10px;top:80.10px;font-size:6.7px;color:#333;font-weight:700;letter-spacing:-0.045px;">Instance</span>
<span class="t" style="left:37.20px;top:78.90px;font-size:8px;color:#f23c3c;">*</span>
<div class="r" style="left:9.10px;top:92.40px;width:88.40px;height:13.30px;background:#fff;border:0.7px solid #d9dde2;box-sizing:border-box;border-radius:1.5px;"></div>
<div class="r" style="left:99.40px;top:92.40px;width:88.70px;height:13.30px;background:#fff;border:0.7px solid #d9dde2;box-sizing:border-box;border-radius:1.5px;"></div>
<span class="t" style="left:12.70px;top:96.90px;font-size:6.2px;color:#444;letter-spacing:-0.086px;">ALL</span>
<span class="t" style="left:102.80px;top:96.90px;font-size:6.2px;color:#444;letter-spacing:0.144px;">qs3_sql server 2019</span>
<span class="t" style="left:9.10px;top:119.20px;font-size:6.7px;color:#333;font-weight:700;letter-spacing:0.114px;">Time</span>
<span class="t" style="left:26.40px;top:117.80px;font-size:8px;color:#f23c3c;">*</span>
<div class="r" style="left:9.10px;top:131.60px;width:40.60px;height:9.50px;background:#e4e8ec;border-radius:1px;"></div>
<span class="t" style="left:14.00px;top:134.20px;font-size:5.9px;color:#555;letter-spacing:0.163px;">Last Month</span>
<div class="r" style="left:52.40px;top:131.60px;width:37.50px;height:9.50px;background:#e4e8ec;border-radius:1px;"></div>
<span class="t" style="left:57.10px;top:134.20px;font-size:5.9px;color:#555;letter-spacing:-0.004px;">Last Week</span>
<div class="r" style="left:92.70px;top:131.60px;width:36.20px;height:9.50px;background:#e4e8ec;border-radius:1px;"></div>
<span class="t" style="left:97.80px;top:134.20px;font-size:5.9px;color:#555;letter-spacing:0.025px;">Yesterday</span>
<div class="r" style="left:131.40px;top:131.60px;width:26.40px;height:9.50px;background:#e4e8ec;border-radius:1px;"></div>
<span class="t" style="left:137.10px;top:134.20px;font-size:5.9px;color:#555;letter-spacing:0.040px;">Today</span>
<div class="r" style="left:9.10px;top:146.20px;width:179.00px;height:12.30px;background:#fff;border:0.7px solid #d9dde2;box-sizing:border-box;border-radius:1.5px;"></div>
<span class="t" style="left:25.10px;top:149.70px;font-size:6px;color:#555;letter-spacing:-0.011px;">2024-08-29 00:00:00~2024-09-05 00:00:00</span>
<span class="t" style="left:9.10px;top:171.50px;font-size:6.7px;color:#333;font-weight:700;letter-spacing:-0.100px;transform:scaleX(0.9657);">Group By</span>
<div class="r" style="left:9.10px;top:183.90px;width:89.10px;height:10.10px;background:#e4e8ec;"></div>
<div class="r" style="left:98.80px;top:183.90px;width:89.30px;height:10.10px;background:#3b82f6;"></div>
<span class="t" style="left:49.20px;top:186.80px;font-size:5.6px;color:#a9afb7;letter-spacing:-0.100px;transform:scaleX(0.8582);">SQL</span>
<span class="t" style="left:130.80px;top:186.80px;font-size:5.8px;color:#fff;font-weight:700;letter-spacing:-0.100px;transform:scaleX(0.9088);">Procedure</span>
<span class="t" style="left:9.10px;top:200.70px;font-size:6.1px;color:#8e939a;letter-spacing:-0.029px;">Procedure List</span>
<span class="t" style="left:9.10px;top:214.40px;font-size:6.8px;color:#777b82;letter-spacing:-0.100px;transform:scaleX(0.9413);">Order By</span>
<div class="r" style="left:101.30px;top:213.30px;width:86.80px;height:12.30px;background:#fff;border:0.7px solid #d9dde2;box-sizing:border-box;border-radius:1.5px;"></div>
<span class="t" style="left:104.70px;top:216.00px;font-size:7px;color:#444;letter-spacing:-0.100px;transform:scaleX(0.9474);">Elapsed Time</span>
<span class="t" style="left:9.10px;top:232.80px;font-size:6.8px;color:#777b82;letter-spacing:-0.027px;">Top</span>
<span class="t" style="left:21.60px;top:232.30px;font-size:8px;color:#f23c3c;">*</span>
<div class="r" style="left:101.30px;top:231.60px;width:86.80px;height:12.00px;background:#fff;border:0.7px solid #d9dde2;box-sizing:border-box;border-radius:1.5px;"></div>
<span class="t" style="left:174.50px;top:234.80px;font-size:6px;color:#666;">5</span>
<span class="t" style="left:9.10px;top:254.30px;font-size:6.1px;color:#8e939a;letter-spacing:-0.100px;transform:scaleX(0.9774);">SQL List</span>
<span class="t" style="left:9.10px;top:267.70px;font-size:6.8px;color:#777b82;letter-spacing:-0.027px;">Top</span>
<span class="t" style="left:21.60px;top:267.20px;font-size:8px;color:#f23c3c;">*</span>
<div class="r" style="left:101.30px;top:266.70px;width:86.80px;height:11.90px;background:#fff;border:0.7px solid #d9dde2;box-sizing:border-box;border-radius:1.5px;"></div>
<span class="t" style="left:171.00px;top:269.40px;font-size:6px;color:#666;letter-spacing:0.008px;">20</span>
<div class="r" style="left:9.00px;top:494.20px;width:179.10px;height:17.80px;background:#3b82f6;border-radius:1px;"></div>
<span class="t" style="left:87.60px;top:501.00px;font-size:6.6px;color:#fff;font-weight:700;letter-spacing:-0.036px;">Search</span>
<svg class="r" style="left:0;top:0" width="946" height="524" viewBox="0 0 946 524"><g fill="none" stroke="#444" stroke-width="1" stroke-linecap="round"><path d="M181.9 36.7L187.5 41.7M187.5 36.7L181.9 41.7"/></g><g fill="none" stroke="#777" stroke-width="0.7"><rect x="14.3" y="150.3" width="5.6" height="5.2" rx="0.6"/><path d="M14.3 151.9H19.9M15.8 149.6V150.9M18.4 149.6V150.9"/></g><g fill="none" stroke="#8f9398" stroke-width="0.65" stroke-linecap="round" stroke-linejoin="round"><path d="M181.3 235.8L183.1 233.7L184.9 235.8M181.3 239.3L183.1 241.4L184.9 239.3"/><path d="M181.3 270.9L183.1 268.8L184.9 270.9M181.3 274.4L183.1 276.5L184.9 274.4"/></g><g fill="#555"><path d="M90.6 98.4H93.6L92.1 100.2Z"/><path d="M181 98.4H184L182.5 100.2Z"/><path d="M181 218.7H184L182.5 220.5Z"/></g></svg>
</div></div></body></html>
